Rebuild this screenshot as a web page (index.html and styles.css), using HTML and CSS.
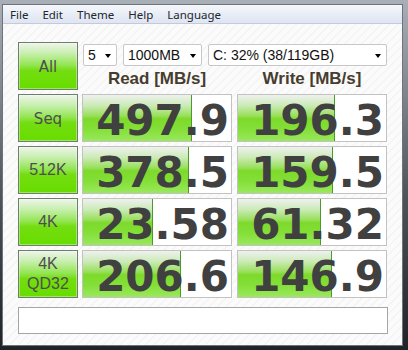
FILE: index.html
```html
<!DOCTYPE html>
<html lang="en">
<head>
    <meta charset="UTF-8">
    <title>CrystalDiskMark</title>
    <link rel="stylesheet" href="styles.css">
</head>
<body>
    <div class="window">
        <div class="menu">
            <span class="menu-item">File</span>
            <span class="menu-item">Edit</span>
            <span class="menu-item">Theme</span>
            <span class="menu-item">Help</span>
            <span class="menu-item">Language</span>
        </div>

        <div class="content">
            <div class="row">
                <div class="btn btn-big">All</div>
                <div class="top">
                    <div class="selects">
                        <div class="select sel-count">5<span class="arrow"></span></div>
                        <div class="select sel-size">1000MB<span class="arrow"></span></div>
                        <div class="select sel-drive">C: 32% (38/119GB)<span class="arrow"></span></div>
                    </div>
                    <div class="heads">
                        <div class="head">Read [MB/s]</div>
                        <div class="head">Write [MB/s]</div>
                    </div>
                </div>
            </div>

            <div class="row">
                <div class="btn btn-big">Seq</div>
                <div class="cell"><div class="bar" style="width: 73.6%"></div><span class="val">497.9</span></div>
                <div class="cell"><div class="bar" style="width: 65.5%"></div><span class="val">196.3</span></div>
            </div>

            <div class="row">
                <div class="btn">512K</div>
                <div class="cell"><div class="bar" style="width: 71.6%"></div><span class="val">378.5</span></div>
                <div class="cell"><div class="bar" style="width: 64.2%"></div><span class="val">159.5</span></div>
            </div>

            <div class="row">
                <div class="btn">4K</div>
                <div class="cell"><div class="bar" style="width: 47.3%"></div><span class="val">23.58</span></div>
                <div class="cell"><div class="bar" style="width: 56%"></div><span class="val">61.32</span></div>
            </div>

            <div class="row">
                <div class="btn btn-two">4K<br>QD32</div>
                <div class="cell"><div class="bar" style="width: 66.2%"></div><span class="val">206.6</span></div>
                <div class="cell"><div class="bar" style="width: 63.5%"></div><span class="val">146.9</span></div>
            </div>

            <div class="status"></div>
        </div>
    </div>
</body>
</html>
```

FILE: styles.css
```css
* {
    margin: 0;
    padding: 0;
    box-sizing: border-box;
}

html, body {
    width: 408px;
    height: 350px;
    overflow: hidden;
}

body {
    font-family: 'Liberation Sans', Arial, sans-serif;
    background: linear-gradient(to bottom, #a9afb7 0%, #8a9098 20%, #50555c 55%, #1f2327 100%);
    padding: 5px 6px 5px 3px;
}

.window {
    width: 399px;
    height: 340px;
    background-color: #fbfbfb;
    background-image: repeating-linear-gradient(135deg, #fbfbfb 0px, #fbfbfb 4px, #f1f1f1 5px, #fbfbfb 6px);
    box-shadow: 0 0 0 1px #6f747b;
}

.menu {
    height: 19px;
    display: flex;
    align-items: center;
    background: linear-gradient(to bottom, #f5f7fb 0%, #e6ebf5 60%, #dfe5f1 100%);
    border-bottom: 1px solid #c3cadb;
    font-family: 'Noto Sans', sans-serif;
    font-size: 11.5px;
    color: #22262e;
    padding: 1px 0 0 0;
}

.menu-item {
    padding: 0 7px;
    line-height: 16px;
}

.content {
    padding: 18px 0 0 15px;
    display: flex;
    flex-direction: column;
    gap: 4px;
}

.row {
    display: flex;
    height: 48px;
}

.btn {
    width: 60px;
    height: 48px;
    margin-right: 4px;
    border: 1px solid #6f7e6c;
    background: linear-gradient(to bottom, #eef5ea 0%, #c9efb0 22%, #93e653 48%, #74dd10 60%, #67dd00 100%);
    box-shadow: inset 0 0 0 1px rgba(255, 255, 255, 0.35);
    display: flex;
    align-items: center;
    justify-content: center;
    text-align: center;
    color: #4e4e4e;
    font-size: 16px;
    line-height: 20px;
}

.btn-big {
    font-family: 'DejaVu Sans', sans-serif;
    font-size: 15px;
    padding-top: 2px;
}

.top {
    width: 305px;
    display: flex;
    flex-direction: column;
}

.selects {
    display: flex;
    gap: 6px;
    margin: 2px 0 0 1px;
    height: 22px;
}

.select {
    position: relative;
    height: 22px;
    background: #ffffff;
    border: 1px solid #c7c7c7;
    border-radius: 2px;
    font-size: 14px;
    line-height: 20px;
    color: #111;
    padding-left: 4px;
}

.sel-count { width: 34px; }
.sel-size { width: 79px; }
.sel-drive { width: 179px; }

.arrow {
    position: absolute;
    right: 5px;
    top: 9px;
    width: 0;
    height: 0;
    border-left: 3.5px solid transparent;
    border-right: 3.5px solid transparent;
    border-top: 4px solid #000;
}

.heads {
    display: flex;
    gap: 5px;
}

.head {
    width: 150px;
    text-align: center;
    font-weight: bold;
    font-size: 17px;
    line-height: 22px;
    padding-top: 2px;
    color: #473d2f;
}

.cell {
    position: relative;
    width: 150px;
    height: 48px;
    margin-right: 5px;
    background: #ffffff;
    border: 1px solid #c2c2c2;
    text-align: right;
    padding: 0 2px 0 0;
}

.bar {
    position: absolute;
    left: 0;
    top: 0;
    bottom: 0;
    border-right: 1px solid #4c9a2c;
    background: linear-gradient(to bottom, #eef1ed 0%, #cdebba 22%, #99e05c 45%, #7dd92a 52%, #84e038 75%, #9ae85e 100%);
}

.val {
    position: relative;
    display: block;
    font-family: 'DejaVu Sans', sans-serif;
    font-weight: bold;
    font-size: 42px;
    line-height: 46px;
    padding-top: 3px;
    color: #404040;
}

.status {
    margin-top: 5px;
    width: 370px;
    height: 27px;
    background: #ffffff;
    border: 1px solid #a6a6a6;
}
```
